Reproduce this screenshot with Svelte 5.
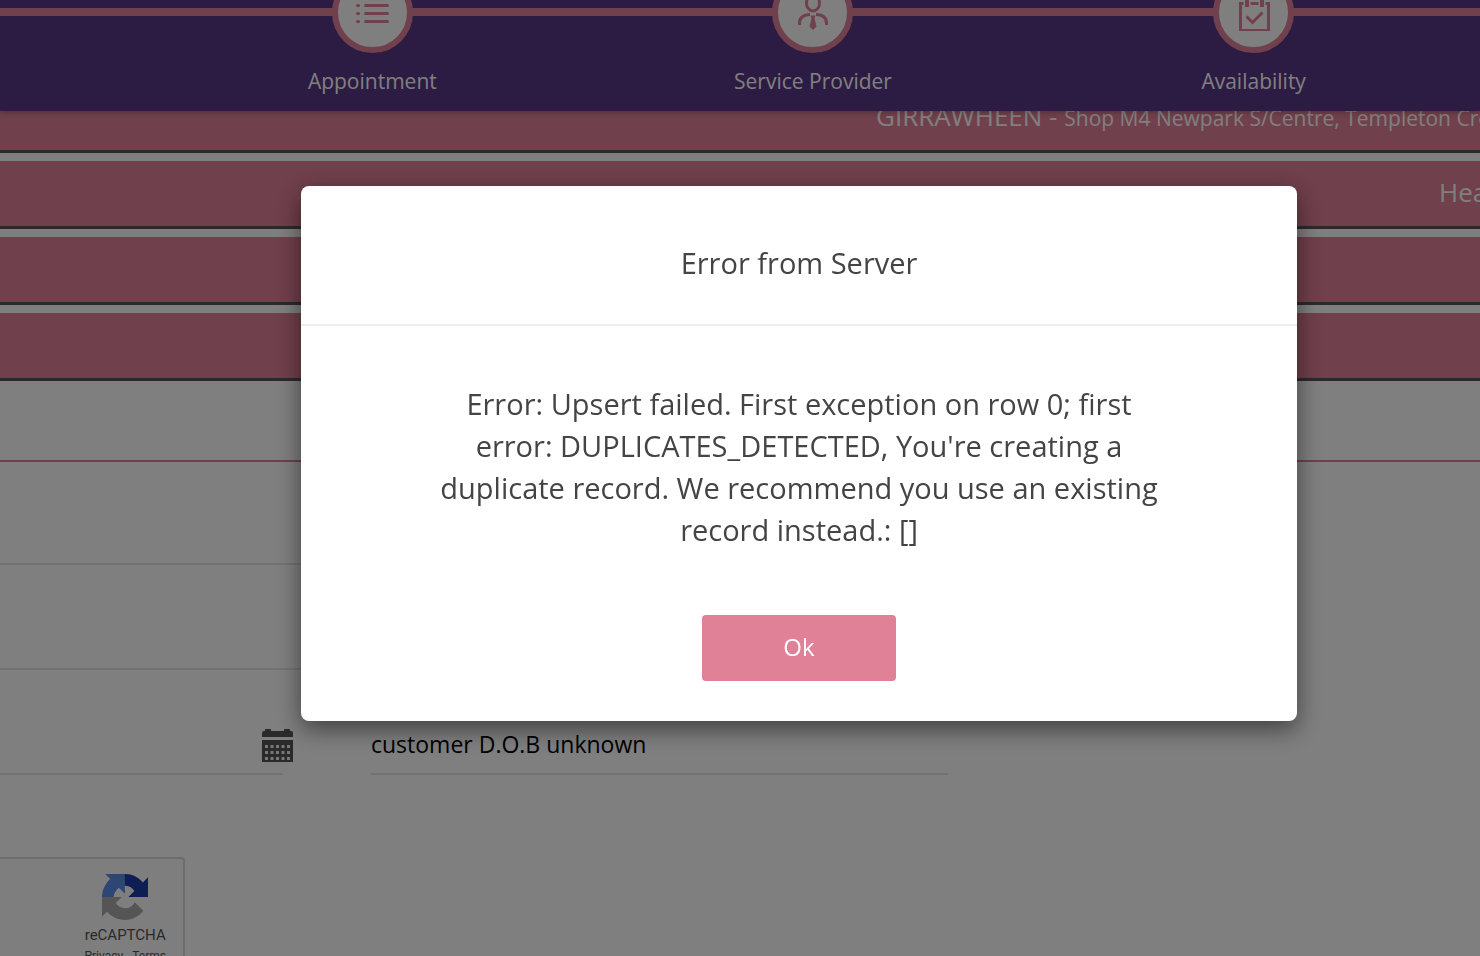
<script>
	let open = $state(true);

	const steps = [
		{ name: "Appointment", icon: "list" },
		{ name: "Service Provider", icon: "person" },
		{ name: "Availability", icon: "calendar" },
	];
</script>

<div class="page">
	<header class="header">
		<nav class="steps">
			{#each steps as { name, icon }}
				<a class="step" href="#{icon}">
					<span class="circle">
						<svg width="36" height="36" viewBox="0 0 36 36">
							{#if icon == "list"}
								<path
									d="M3.5 10.500h1M3.500 18.500h1M3.500 26.500h1M11.500 10.500h22M11.500 18.500h22M11.500 26.500h22"
									stroke-linecap="round"
								/>
							{:else if icon == "person"}
								<ellipse cx="18" cy="8" rx="6.500" ry="8" />
								<path d="M4.500 30v-2q0-8 10.500-8.500M31.500 30v-2q0-8-10.500-8.500" />
								<path
									class="solid"
									d="M15.500 20.500h5l-1 3 2 8-3.500 3.500-3.500-3.500 2-8z"
								/>
							{:else}
								<path d="M7.500 8.500h-3v27h28v-27h-3M14.500 8.500h8" />
								<path d="M11 0v12M26 0v12" stroke-width="4" />
								<path d="M10.500 21.500l6 6 10-10" />
							{/if}
						</svg>
					</span>
					<span class="stepname">{name}</span>
				</a>
			{/each}
		</nav>
	</header>

	<main>
		<div class="locations">
			<button class="location address">
				GIRRAWHEEN - <small>Shop M4 Newpark S/Centre, Templeton Cre</small>
			</button>
			<button class="location provider">Hea</button>
			<button class="location" aria-label="Date"></button>
			<button class="location" aria-label="Time"></button>
		</div>

		<form class="form">
			<div class="title"></div>
			<input class="field" type="text" aria-label="Name" />
			<input class="field" type="text" aria-label="Phone" />
			<div class="row">
				<div class="date">
					<input class="field" type="text" aria-label="Date of birth" />
					<svg class="calendar" width="31" height="33" viewBox="0 0 31 33">
						<path
							fill="#555"
							d="M0 4q0-2 2-2h1V1q0-1 1-1h4q1 0 1 1v1h13V1q0-1 1-1h4q1 0 1 1v1h1q2 0 2 2v4H0zM0 11h31v22H0z"
						/>
						<path
							stroke="#eee"
							stroke-width="3"
							stroke-dasharray="3 2.500"
							d="M3 17.500h25M3 23.500h25M3 29.500h25"
						/>
					</svg>
				</div>
				<input
					class="field unknown"
					type="text"
					aria-label="Notes"
					value="customer D.O.B unknown"
				/>
			</div>
			<div class="captcha">
				<div class="brand">
					<svg width="46" height="46" viewBox="0 0 64 64">
						<path
							fill="#1c3aa9"
							d="M64 31.955l-.033-1.370V4.687l-7.160 7.160C50.948 4.674 42.033.093 32.050.093c-10.400 0-19.622 4.960-25.458 12.640l11.736 11.860a15.550 15.550 0 0 1 4.754-5.334c2.050-1.600 4.952-2.906 8.968-2.906.485 0 .860.057 1.135.163 4.976.393 9.288 3.140 11.828 7.124l-8.307 8.307L64 31.953"
						/>
						<path
							fill="#5a8fe8"
							d="M31.862.094l-1.370.033H4.594l7.160 7.160C4.580 13.147 0 22.060 0 32.046c0 10.400 4.960 19.622 12.640 25.458L24.500 45.768a15.550 15.550 0 0 1-5.334-4.754c-1.600-2.050-2.906-4.952-2.906-8.968 0-.485.057-.860.163-1.135.393-4.976 3.140-9.288 7.124-11.828l8.307 8.307L31.860.095"
						/>
						<path
							fill="#ababab"
							d="M.001 32.045l.033 1.370v25.898l7.160-7.160c5.860 7.173 14.774 11.754 24.760 11.754 10.400 0 19.622-4.960 25.458-12.640l-11.736-11.860a15.550 15.550 0 0 1-4.754 5.334c-2.050 1.600-4.952 2.906-8.968 2.906-.485 0-.860-.057-1.135-.163-4.976-.393-9.288-3.140-11.828-7.124l8.307-8.307c-10.522.040-22.400.066-27.295-.005"
						/>
					</svg>
					<span>reCAPTCHA</span>
					<small><a href="#privacy">Privacy</a> - <a href="#terms">Terms</a></small>
				</div>
			</div>
		</form>
	</main>
</div>

{#if open}
	<div class="overlay">
		<div class="modal" role="dialog" aria-modal="true" aria-labelledby="title">
			<h1 class="heading" id="title">Error from Server</h1>
			<div class="body">
				<p class="message">
					Error: Upsert failed. First exception on row 0; first error:
					DUPLICATES_DETECTED, You're creating a duplicate record. We recommend
					you use an existing record instead.: []
				</p>
				<button class="ok" onclick={() => (open = false)}>Ok</button>
			</div>
		</div>
	</div>
{/if}

<style>
	:global(body) {
		font-family: "Open Sans", sans-serif;
		color: #444;
		overflow: hidden;
	}
	* {
		box-sizing: border-box;
	}
	button,
	input {
		font-family: inherit;
	}
	.page {
		height: 100vh;
		overflow: hidden;
		background: #fff;
	}

	/* Progress steps, scrolled half way under the top edge */
	.header {
		position: relative;
		z-index: 1;
		height: 111px;
		overflow: hidden;
		background: linear-gradient(#e08198, #e08198) 0 8px / 100% 8px no-repeat #583686;
		box-shadow: 0 1px 6px rgba(0, 0, 0, 0.3);
	}
	.steps {
		display: grid;
		grid-template-columns: repeat(3, 1fr);
		padding: 0 6px 0 152px;
		margin-top: -28px;
	}
	.step {
		display: flex;
		flex-direction: column;
		align-items: center;
		gap: 12px;
		color: #fff;
		text-decoration: none;
	}
	.circle {
		display: flex;
		align-items: center;
		justify-content: center;
		width: 81px;
		height: 81px;
		border: 6px solid #e08198;
		border-radius: 50%;
		background: #fff;
	}
	.circle svg {
		fill: none;
		stroke: #e08198;
		stroke-width: 3;
	}
	.circle .solid {
		fill: #e08198;
		stroke: none;
	}
	.stepname {
		font-size: 21px;
		font-weight: 500;
		line-height: 32px;
	}

	/* Selected options */
	.locations {
		display: flex;
		flex-direction: column;
		gap: 8px;
		margin-top: -26px;
	}
	.location {
		height: 68px;
		padding: 0 0 4px;
		border: 0;
		border-bottom: 3px solid #555;
		background: #e08198;
		color: #fff;
		font-size: 26px;
		text-align: left;
		white-space: nowrap;
		overflow: hidden;
	}
	.location small {
		font-size: 21px;
	}
	.address {
		padding-left: 876px;
	}
	.provider {
		padding-left: 1439px;
	}

	/* Customer details */
	.title {
		height: 81px;
		border-bottom: 2px solid #e08198;
	}
	.field {
		display: block;
		width: 100%;
		height: 60px;
		padding: 0;
		border: 0;
		border-bottom: 2px solid #e5e5e5;
		background: none;
		color: #000;
		font-size: 23px;
	}
	.form > .field {
		width: 64%;
		margin-top: 43px;
	}
	.form > .field + .field {
		margin-top: 45px;
	}
	.row {
		display: grid;
		grid-template-columns: 293px 577px;
		gap: 78px;
		margin-top: 45px;
	}
	.date {
		display: grid;
		grid-template-columns: 283px 10px;
		align-items: center;
	}
	.calendar {
		margin-left: -21px;
	}
	.captcha {
		display: flex;
		justify-content: flex-end;
		width: 185px;
		height: 117px;
		margin-top: 82px;
		padding: 15px 17px 0 0;
		border: 2px solid #d8d8d8;
		border-left: 0;
		border-radius: 0 4px 4px 0;
		background: #fcfcfc;
	}
	.brand {
		display: flex;
		flex-direction: column;
		align-items: center;
		color: #555;
		font: 15px/30px Roboto, sans-serif;
	}
	.brand small {
		font-size: 12px;
		line-height: 12px;
	}
	.brand a {
		color: inherit;
		text-decoration: none;
	}

	/* Error dialog */
	.overlay {
		position: fixed;
		inset: 0;
		z-index: 2;
		display: flex;
		align-items: flex-start;
		justify-content: center;
		padding: 186px 0 0 118px;
		background: rgba(0, 0, 0, 0.5);
	}
	.modal {
		width: 996px;
		border-radius: 8px;
		background: #fff;
		box-shadow: 0 8px 24px rgba(0, 0, 0, 0.5);
	}
	.heading {
		margin: 0;
		padding: 56px 0 40px;
		border-bottom: 2px solid #eee;
		font-size: 29px;
		font-weight: 400;
		line-height: 42px;
		text-align: center;
	}
	.body {
		display: flex;
		flex-direction: column;
		align-items: center;
		padding: 57px 132px 40px;
	}
	.message {
		margin: 0;
		font-size: 29px;
		line-height: 42px;
		text-align: center;
	}
	.ok {
		width: 194px;
		height: 66px;
		margin-top: 64px;
		padding: 0 0 4px;
		border: 0;
		border-radius: 4px;
		background: #e08198;
		color: #fff;
		font-size: 24px;
	}
</style>
